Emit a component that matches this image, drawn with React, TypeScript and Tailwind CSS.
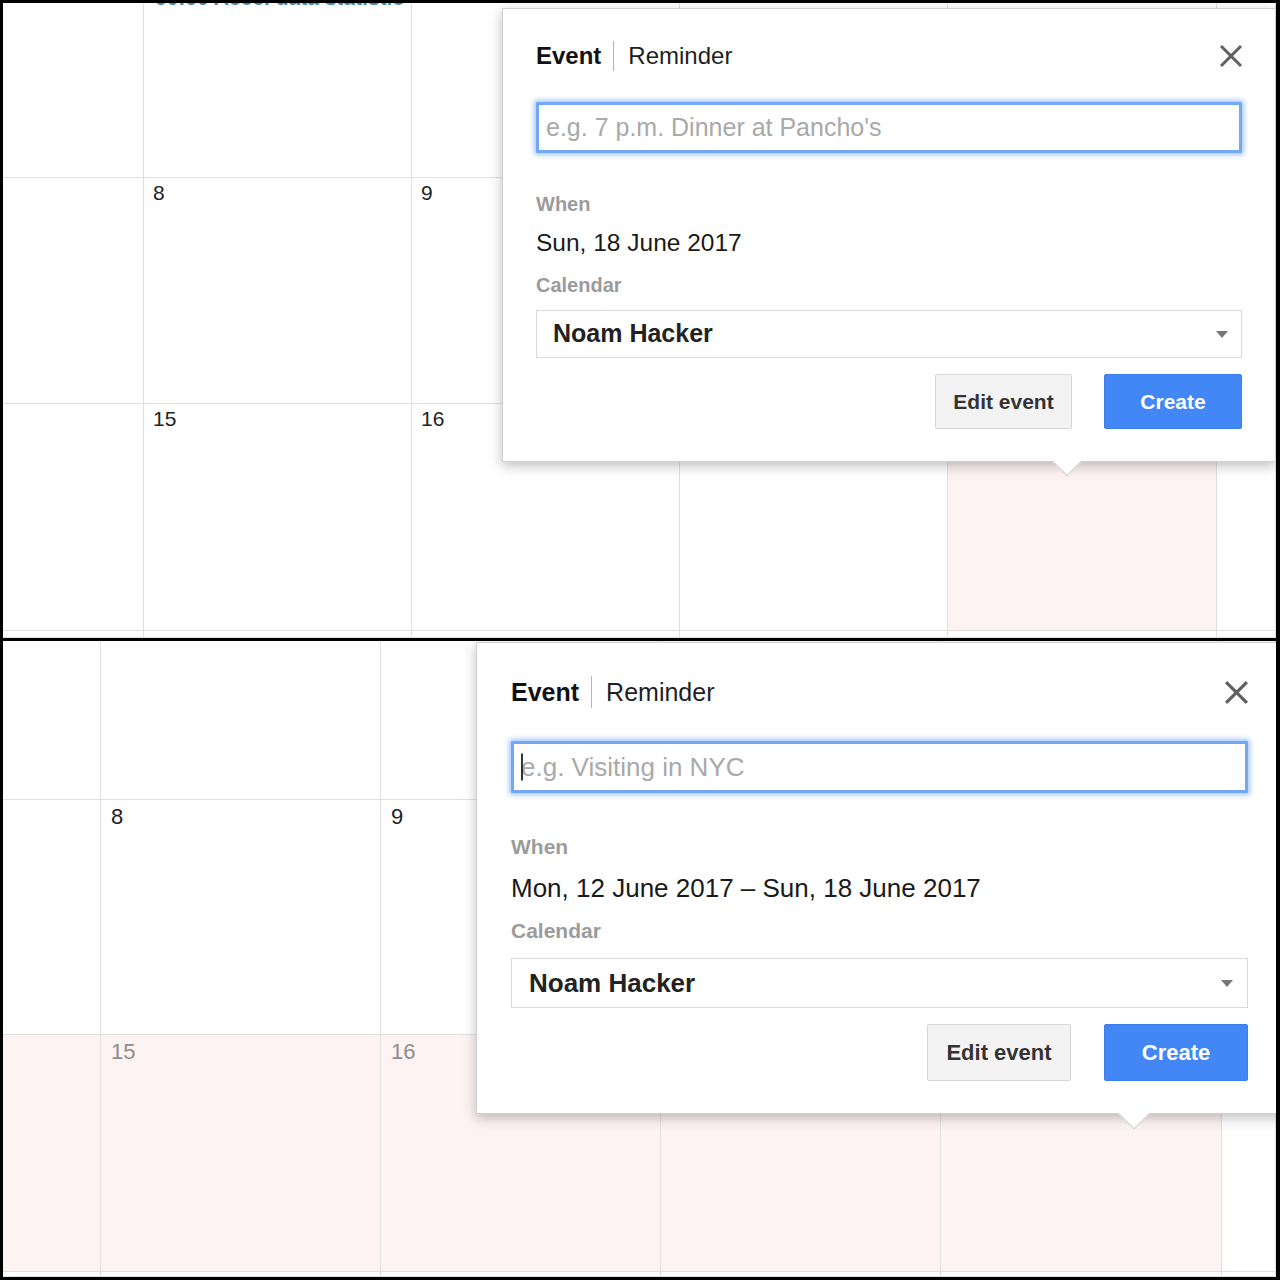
import React from "react";

type Cell = { n?: string; pink?: boolean; muted?: boolean; event?: string };

type Size = {
  popup: string;
  text: string;
  date: string;
  label: string;
  divider: string;
  x: number;
  input: string;
  inputMt: string;
  whenMt: string;
  dateMt: string;
  calMt: string;
  select: string;
  selectMt: string;
  arrow: string;
  buttons: string;
  edit: string;
  create: string;
  btnText: string;
  pointer: string;
};

const SMALL: Size = {
  popup: "left-[499px] top-[5px] w-[774px] px-[33px] pt-[27px] pb-[32px]",
  text: "text-[24px]",
  date: "text-[24.5px]",
  label: "text-[20px] leading-[24px]",
  divider: "h-[30px]",
  x: 24,
  input: "h-[51px] pl-[7px] text-[25px]",
  inputMt: "mt-[26px]",
  whenMt: "mt-[39px]",
  dateMt: "mt-[12px]",
  calMt: "mt-[15px]",
  select: "h-[48px] pl-[16px] pr-[13px] text-[25px]",
  selectMt: "mt-[13px]",
  arrow: "border-x-[6px] border-t-[7px]",
  buttons: "mt-[16px] gap-[32px]",
  edit: "h-[55px] w-[137px]",
  create: "h-[55px] w-[138px]",
  btnText: "text-[21px]",
  pointer: "left-[554px] -bottom-[11px] h-[20px] w-[20px]",
};

const LARGE: Size = {
  popup: "left-[473px] top-[1px] w-[807px] px-[34px] pt-[29px] pb-[32px]",
  text: "text-[25px]",
  date: "text-[26px]",
  label: "text-[21px] leading-[24px]",
  divider: "h-[32px]",
  x: 25,
  input: "h-[52px] pl-[7px] text-[26px]",
  inputMt: "mt-[29px]",
  whenMt: "mt-[42px]",
  dateMt: "mt-[14px]",
  calMt: "mt-[16px]",
  select: "h-[50px] pl-[17px] pr-[14px] text-[26px]",
  selectMt: "mt-[15px]",
  arrow: "border-x-[6px] border-t-[7px]",
  buttons: "mt-[16px] gap-[33px]",
  edit: "h-[57px] w-[144px]",
  create: "h-[57px] w-[144px]",
  btnText: "text-[22px]",
  pointer: "left-[646px] -bottom-[12px] h-[22px] w-[22px]",
};

function Popup({ s, placeholder, when, caret }: { s: Size; placeholder: string; when: string; caret?: boolean }) {
  return (
    <div className={`absolute z-10 flex flex-col border border-[#cfcfcf] bg-white shadow-[0_4px_12px_rgba(0,0,0,0.25)] ${s.popup}`}>
      <div className="flex h-10 items-center justify-between">
        <div className={`flex items-center leading-none ${s.text}`}>
          <span className="font-bold text-[#111]">Event</span>
          <span className={`ml-[12px] mr-[14px] w-px bg-[#b5b5b5] ${s.divider}`} />
          <span className="text-[#1f1f1f]">Reminder</span>
        </div>
        <svg width={s.x} height={s.x} viewBox="0 0 24 24" className="mr-[-1px]">
          <path d="M2 2L22 22M22 2L2 22" stroke="#5f5f5f" strokeWidth="3" />
        </svg>
      </div>

      <div className={`relative ${s.inputMt}`}>
        <input
          placeholder={placeholder}
          className={`w-full rounded-[1px] border-[3px] border-[#72a9f6] bg-white text-[#222] shadow-[0_0_5px_2px_rgba(77,144,254,0.5)] outline-none placeholder:text-[#a9a9a9] ${s.input}`}
        />
        {caret && <span className="absolute left-[10px] top-1/2 h-[27px] w-[2px] -translate-y-1/2 bg-[#333]" />}
      </div>

      <div className={`font-bold text-[#9b9b9b] ${s.label} ${s.whenMt}`}>When</div>
      <div className={`leading-[30px] text-[#1a1a1a] ${s.date} ${s.dateMt}`}>{when}</div>
      <div className={`font-bold text-[#9b9b9b] ${s.label} ${s.calMt}`}>Calendar</div>

      <div className={`flex items-center justify-between border border-[#d9d9d9] bg-white ${s.select} ${s.selectMt}`}>
        <span className="font-bold text-[#222]">Noam Hacker</span>
        <span className={`h-0 w-0 border-x-transparent border-t-[#777] ${s.arrow}`} />
      </div>

      <div className={`flex justify-end ${s.buttons}`}>
        <div className={`flex items-center justify-center rounded-[2px] border border-[#d6d6d6] bg-[#f3f3f3] font-bold text-[#333] ${s.edit} ${s.btnText}`}>
          Edit event
        </div>
        <div className={`flex items-center justify-center rounded-[2px] border border-[#3b7ded] bg-[#4287f5] font-bold text-white ${s.create} ${s.btnText}`}>
          Create
        </div>
      </div>

      <span className={`absolute rotate-45 border-b border-r border-[#cfcfcf] bg-white ${s.pointer}`} />
    </div>
  );
}

function Grid({ rows, cols, rowSizes, num }: { rows: Cell[][]; cols: string; rowSizes: string; num: string }) {
  return (
    <div className={`grid h-full ${cols} ${rowSizes}`}>
      {rows.flat().map((c, i) => (
        <div
          key={i}
          className={`overflow-hidden border-b border-r border-[#e0e0e0] ${c.pink ? "bg-[#fdf3f2]" : "bg-white"}`}
        >
          {c.event && (
            <div className="-mt-[17px] whitespace-nowrap pl-[11px] text-[21px] font-bold leading-[24px] text-[#3d8db5]">
              {c.event}
            </div>
          )}
          {c.n && <div className={`${num} ${c.muted ? "text-[#8d8d8d]" : "text-[#222]"}`}>{c.n}</div>}
        </div>
      ))}
    </div>
  );
}

// day numbers hidden under the popup are left out
const topRows: Cell[][] = [
  [{}, { event: "00:00 Accel data statistic" }, {}, {}, {}, {}],
  [{}, { n: "8" }, { n: "9" }, {}, {}, {}],
  [{}, { n: "15" }, { n: "16" }, {}, { pink: true }, {}],
  [{}, {}, {}, {}, {}, {}],
];

const bottomRows: Cell[][] = [
  [{}, {}, {}, {}, {}, {}],
  [{}, { n: "8" }, { n: "9" }, {}, {}, {}],
  [
    { pink: true },
    { n: "15", pink: true, muted: true },
    { n: "16", pink: true, muted: true },
    { pink: true },
    { pink: true },
    {},
  ],
  [{}, {}, {}, {}, {}, {}],
];

export default function App() {
  return (
    <div className="flex h-[1280px] w-[1280px] flex-col gap-[3px] bg-black pb-[3px] pl-[3px] pr-[4px] pt-[3px] font-['Liberation_Sans',Arial,sans-serif]">
      <div className="relative h-[635px] overflow-hidden bg-white">
        <Grid
          rows={topRows}
          cols="grid-cols-[141px_268px_268px_268px_269px_1fr]"
          rowSizes="grid-rows-[175px_226px_227px_1fr]"
          num="pl-[9px] pt-[3px] text-[21px] leading-[24px]"
        />
        <Popup s={SMALL} placeholder="e.g. 7 p.m. Dinner at Pancho's" when="Sun, 18 June 2017" />
      </div>
      <div className="relative flex-1 overflow-hidden bg-white">
        <Grid
          rows={bottomRows}
          cols="grid-cols-[98px_280px_280px_280px_281px_1fr]"
          rowSizes="grid-rows-[159px_235px_237px_1fr]"
          num="pl-[10px] pt-[4px] text-[22px] leading-[26px]"
        />
        <Popup s={LARGE} placeholder="e.g. Visiting in NYC" when="Mon, 12 June 2017 – Sun, 18 June 2017" caret />
      </div>
    </div>
  );
}
